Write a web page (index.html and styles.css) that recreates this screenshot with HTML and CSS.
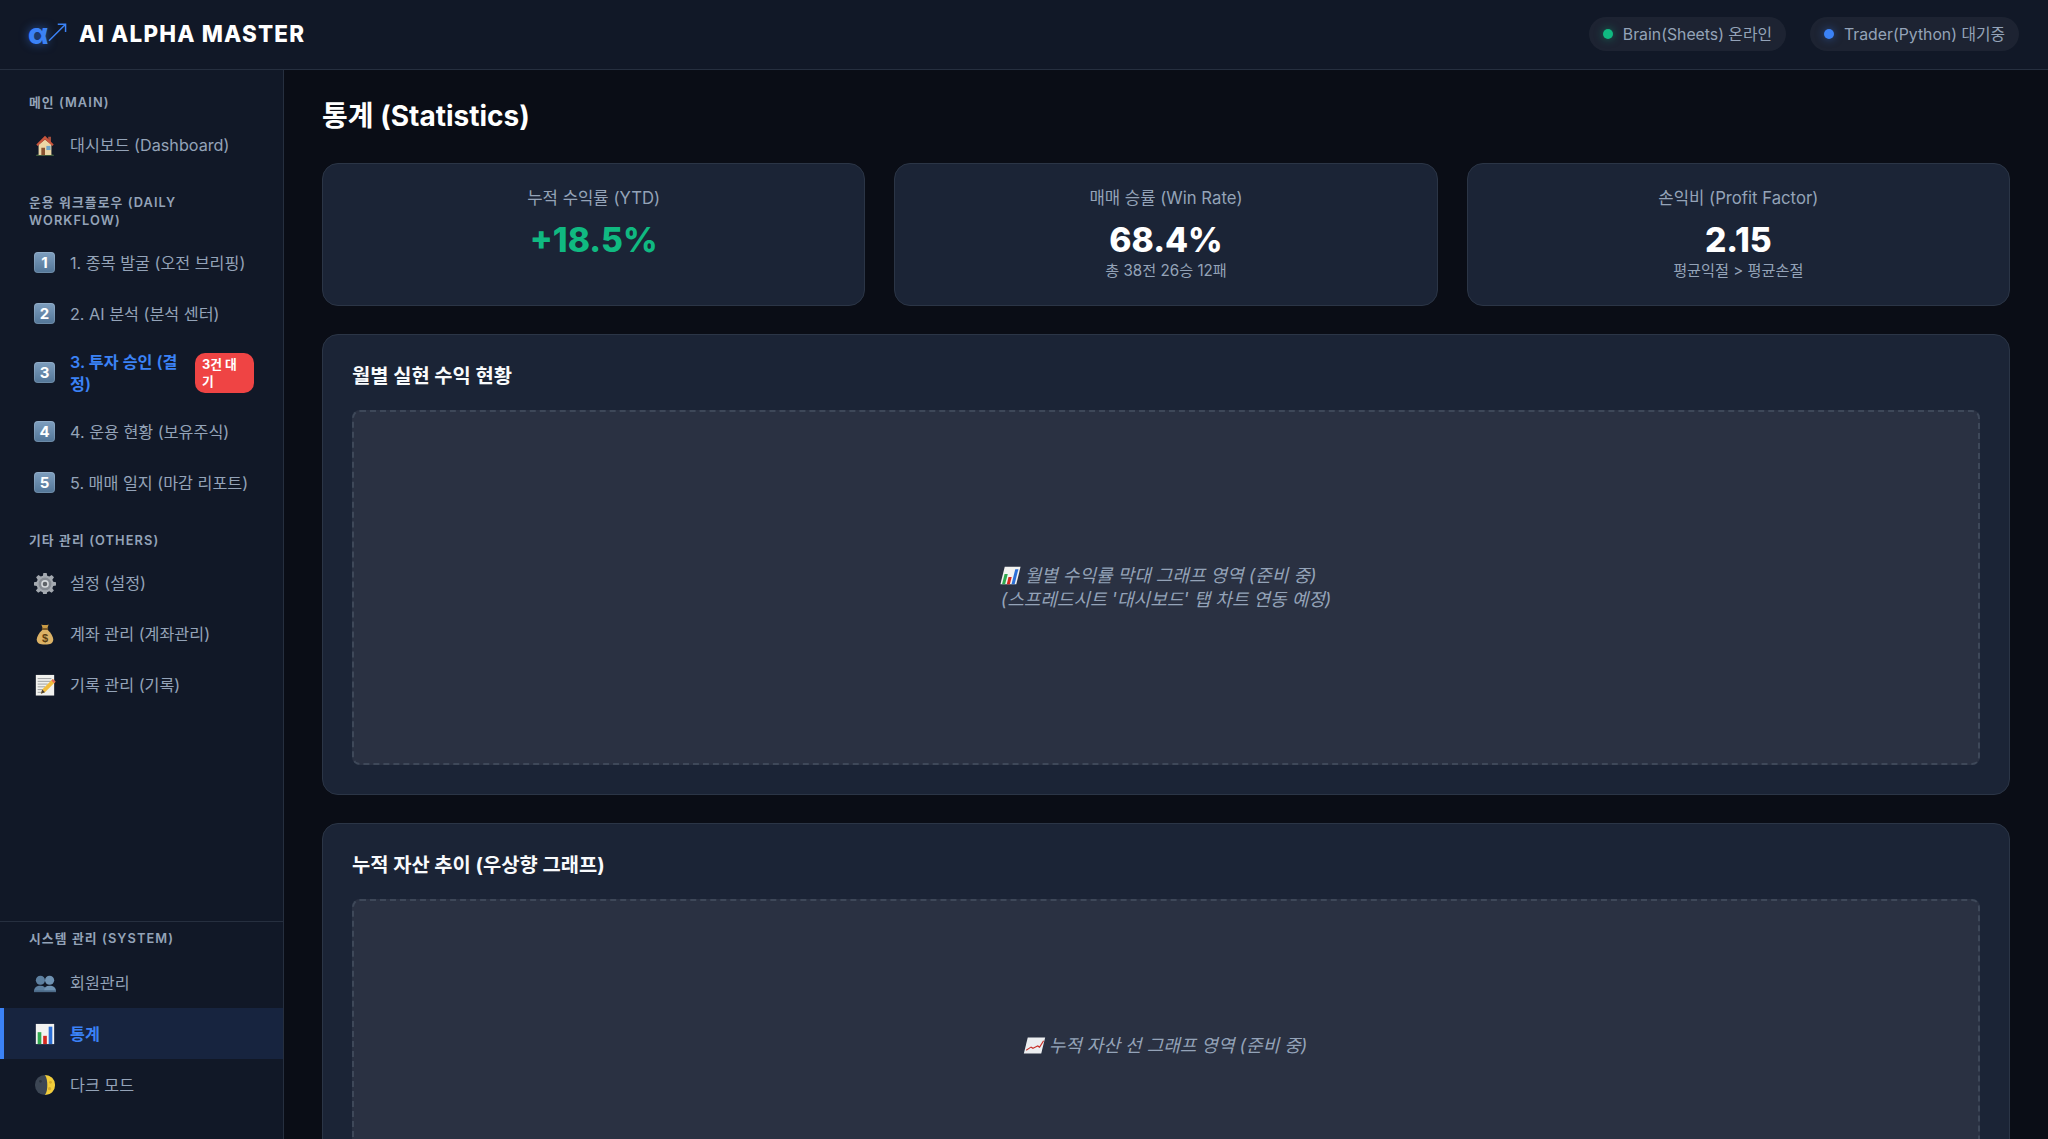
FILE: index.html
```html
<!DOCTYPE html>
<html lang="ko">
<head>
    <meta charset="UTF-8">
    <meta name="viewport" content="width=device-width, initial-scale=1.0">
    <title>AI Alpha Master</title>
    <link rel="stylesheet" href="styles.css">
</head>
<body>
    <svg class="icon-defs" aria-hidden="true">
        <symbol id="i-house" viewBox="0 0 24 24">
            <path d="M3 22.5h18l1 1H2z" fill="#6d9a52"/>
            <rect x="15.5" y="3" width="3" height="6" fill="#a8503f"/>
            <path d="M5 11.5 12 6l7 5.5V23H5z" fill="#ecd6a6"/>
            <path d="M12 2 2.5 11.5l1.5 1.5L12 6l8 7 1.5-1.5z" fill="#c9553c"/>
            <rect x="8" y="15" width="4" height="8" fill="#8a5230"/>
            <rect x="13.5" y="13" width="4.5" height="4.5" fill="#6fa3c8"/>
        </symbol>
        <symbol id="i-gear" viewBox="0 0 24 24">
            <path d="M10.2 1h3.6l.6 3 2.3 1 2.6-1.700 2.500 2.500L20 8.400l1 2.300 3 .6v3.400l-3 .6-1 2.300 1.700 2.600-2.500 2.500-2.600-1.700-2.300 1-.6 3h-3.600l-.6-3-2.300-1-2.600 1.700-2.500-2.500L4 17.600l-1-2.300-3-.6v-3.400l3-.6 1-2.300-1.700-2.600 2.500-2.500 2.600 1.700 2.300-1z" fill="#a4a9b0"/>
            <circle cx="12" cy="13" r="7" fill="#858a92"/>
            <circle cx="12" cy="13" r="4.200" fill="#d5d8dc"/>
            <circle cx="12" cy="13" r="2.500" fill="#5e6268"/>
        </symbol>
        <symbol id="i-bag" viewBox="0 0 24 24">
            <path d="M8 1.500c2 1 6 1 8 0l-1.500 4.500h-5z" fill="#c99a45"/>
            <rect x="8.500" y="5.500" width="7" height="2" rx="1" fill="#7d5a26"/>
            <path d="M9 7.500h6c3.500 3 6 7 6 10.500 0 4-3 5.500-9 5.500S3 22 3 18c0-3.500 2.500-7.500 6-10.500z" fill="#dcb266"/>
            <text x="12" y="21" text-anchor="middle" class="bag-sign">$</text>
        </symbol>
        <symbol id="i-memo" viewBox="0 0 24 24">
            <rect x="2" y="1" width="20" height="22.500" fill="#f1f1ee"/>
            <path d="M4 5h15M4 8h15M4 11h11M4 14h8M4 17h6M4 20h7" stroke="#8d8f92" stroke-width=".9"/>
            <path d="m20.500 5.500 3 3L12 20l-4.500 1.500L9 17z" fill="#f2bd3e"/>
            <path d="m20.500 5.500 3 3-1.500 1.500-3-3z" fill="#e46a5c"/>
            <path d="m9 17 3 3-4.500 1.500z" fill="#4a4038"/>
        </symbol>
        <symbol id="i-busts" viewBox="0 0 24 24">
            <g fill="#5d7f9f">
                <circle cx="7" cy="9" r="5"/>
                <path d="M0 21c0-4 3-6 7-6s6 2 6 6z"/>
            </g>
            <g fill="#6f92b2">
                <circle cx="17" cy="9" r="5"/>
                <path d="M11 21c0-4 2-6 6-6s7 2 7 6z"/>
            </g>
            <rect y="20" width="24" height="2" fill="#4d6b88"/>
        </symbol>
        <symbol id="i-bars" viewBox="0 0 24 24">
            <rect x="2" y="1" width="20" height="22" fill="#f3f3f1"/>
            <rect x="4" y="10" width="4" height="13" fill="#2fa84f"/>
            <rect x="10" y="14" width="4" height="9" fill="#d5281f"/>
            <rect x="16" y="4" width="4" height="19" fill="#2c6fd6"/>
        </symbol>
        <symbol id="i-moon" viewBox="0 0 24 24">
            <circle cx="12" cy="12" r="11" fill="#3c4654"/>
            <path d="M12 1a11 11 0 0 1 0 22c2-3 2.500-7 2.500-11S14 4 12 1z" fill="#f2cd3a"/>
            <circle cx="18" cy="9" r="1.500" fill="#d8ab2a"/>
            <circle cx="17" cy="16" r="1.800" fill="#d8ab2a"/>
            <circle cx="7" cy="8" r="1.500" fill="#2b333f"/>
        </symbol>
        <symbol id="i-line" viewBox="0 0 24 24">
            <rect x="1" y="2" width="22" height="20" fill="#eceef0"/>
            <path d="m3 18 5-4 3 1.500 5-3 3 1.500 3-8" fill="none" stroke="#c8322b" stroke-width="1.500"/>
        </symbol>
    </svg>

    <header class="topbar">
        <div class="brand">
            <span class="brand-mark"><span class="brand-alpha">α</span><svg class="brand-arrow" viewBox="0 0 20 20"><path d="M1 19 18 2M10 2h8v8" fill="none" stroke="#3b82f6" stroke-width="1.500"/></svg></span>
            <span class="brand-name">AI ALPHA MASTER</span>
        </div>
        <div class="status-list">
            <div class="status-pill"><span class="dot dot-green"></span>Brain(Sheets) 온라인</div>
            <div class="status-pill"><span class="dot dot-blue"></span>Trader(Python) 대기중</div>
        </div>
    </header>

    <div class="layout">
        <aside class="sidebar">
            <div class="nav-top">
                <div class="nav-section">
                    <div class="nav-label">메인 (Main)</div>
                    <a class="nav-item"><span class="nav-icon"><svg><use href="#i-house"/></svg></span><span class="nav-text">대시보드 (Dashboard)</span></a>
                </div>
                <div class="nav-section">
                    <div class="nav-label">운용 워크플로우 (Daily Workflow)</div>
                    <a class="nav-item"><span class="nav-icon"><span class="keycap">1</span></span><span class="nav-text">1. 종목 발굴 (오전 브리핑)</span></a>
                    <a class="nav-item"><span class="nav-icon"><span class="keycap">2</span></span><span class="nav-text">2. AI 분석 (분석 센터)</span></a>
                    <a class="nav-item nav-pending"><span class="nav-icon"><span class="keycap">3</span></span><span class="nav-text">3. 투자 승인 (결정)</span><span class="badge">3건 대기</span></a>
                    <a class="nav-item"><span class="nav-icon"><span class="keycap">4</span></span><span class="nav-text">4. 운용 현황 (보유주식)</span></a>
                    <a class="nav-item"><span class="nav-icon"><span class="keycap">5</span></span><span class="nav-text">5. 매매 일지 (마감 리포트)</span></a>
                </div>
                <div class="nav-section">
                    <div class="nav-label">기타 관리 (Others)</div>
                    <a class="nav-item"><span class="nav-icon"><svg><use href="#i-gear"/></svg></span><span class="nav-text">설정 (설정)</span></a>
                    <a class="nav-item"><span class="nav-icon"><svg><use href="#i-bag"/></svg></span><span class="nav-text">계좌 관리 (계좌관리)</span></a>
                    <a class="nav-item"><span class="nav-icon"><svg><use href="#i-memo"/></svg></span><span class="nav-text">기록 관리 (기록)</span></a>
                </div>
            </div>
            <div class="nav-bottom">
                <div class="nav-label">시스템 관리 (System)</div>
                <a class="nav-item"><span class="nav-icon"><svg><use href="#i-busts"/></svg></span><span class="nav-text">회원관리</span></a>
                <a class="nav-item active"><span class="nav-icon"><svg><use href="#i-bars"/></svg></span><span class="nav-text">통계</span></a>
                <a class="nav-item"><span class="nav-icon"><svg><use href="#i-moon"/></svg></span><span class="nav-text">다크 모드</span></a>
            </div>
        </aside>

        <main class="content">
            <h1 class="page-title">통계 (Statistics)</h1>

            <div class="stat-grid">
                <div class="stat-card">
                    <div class="stat-label">누적 수익률 (YTD)</div>
                    <div class="stat-value positive">+18.5%</div>
                </div>
                <div class="stat-card">
                    <div class="stat-label">매매 승률 (Win Rate)</div>
                    <div class="stat-value">68.4%</div>
                    <div class="stat-sub">총 38전 26승 12패</div>
                </div>
                <div class="stat-card">
                    <div class="stat-label">손익비 (Profit Factor)</div>
                    <div class="stat-value">2.15</div>
                    <div class="stat-sub">평균익절 &gt; 평균손절</div>
                </div>
            </div>

            <section class="chart-card">
                <h2 class="chart-title">월별 실현 수익 현황</h2>
                <div class="chart-box chart-monthly">
                    <p><svg class="inline-icon"><use href="#i-bars"/></svg> 월별 수익률 막대 그래프 영역 (준비 중)<br>(스프레드시트 '대시보드' 탭 차트 연동 예정)</p>
                </div>
            </section>

            <section class="chart-card">
                <h2 class="chart-title">누적 자산 추이 (우상향 그래프)</h2>
                <div class="chart-box chart-total">
                    <p><svg class="inline-icon"><use href="#i-line"/></svg> 누적 자산 선 그래프 영역 (준비 중)</p>
                </div>
            </section>
        </main>
    </div>
</body>
</html>
```

FILE: styles.css
```css
* {
    box-sizing: border-box;
}
html, body {
    height: 100%;
}
body {
    margin: 0;
    display: flex;
    flex-direction: column;
    height: 100vh;
    overflow: hidden;
    font-family: Inter, "Noto Sans CJK KR", sans-serif;
    background-color: #0a0d16;
    color: #f8fafc;
}
.icon-defs {
    display: none;
}

/* top bar */
.topbar {
    flex: none;
    display: flex;
    justify-content: space-between;
    align-items: center;
    height: 70px;
    padding: 0 29px 2px 28px;
    background-color: #111827;
    border-bottom: 1px solid #262f3f;
}
.brand {
    display: flex;
    align-items: center;
    gap: 11px;
}
.brand-mark {
    display: flex;
    align-items: center;
    width: 40px;
}
.brand-alpha {
    font-size: 29px;
    line-height: 1;
    font-weight: 800;
    color: #3b82f6;
    text-shadow: 0 0 10px rgba(59, 130, 246, 0.6);
}
.brand-arrow {
    width: 20px;
    height: 20px;
    margin-bottom: 4px;
}
.brand-name {
    font-size: 22.4px;
    font-weight: 800;
    letter-spacing: 1.2px;
    color: #fff;
}
.status-list {
    display: flex;
    gap: 24px;
}
.status-pill {
    display: flex;
    align-items: center;
    gap: 10px;
    height: 34px;
    padding: 0 14px;
    border-radius: 17px;
    background-color: rgba(255, 255, 255, 0.05);
    font-size: 15.8px;
    color: #94a3b8;
}
.dot {
    width: 10px;
    height: 10px;
    border-radius: 50%;
}
.dot-green {
    background-color: #10b981;
    box-shadow: 0 0 8px rgba(16, 185, 129, 0.5);
}
.dot-blue {
    background-color: #3b82f6;
    box-shadow: 0 0 8px rgba(59, 130, 246, 0.5);
}

/* sidebar */
.layout {
    flex: 1;
    display: flex;
    min-height: 0;
}
.sidebar {
    flex: none;
    width: 284px;
    display: flex;
    flex-direction: column;
    justify-content: space-between;
    background-color: #111827;
    border-right: 1px solid #262f3f;
}
.nav-top {
    padding-top: 23.5px;
}
.nav-section {
    margin-bottom: 24px;
}
.nav-bottom {
    padding: 8px 0 29px;
    border-top: 1px solid #262f3f;
}
.nav-label {
    padding: 0 29px;
    margin-bottom: 8px;
    font-size: 12.8px;
    line-height: 17.6px;
    font-weight: 600;
    letter-spacing: 1.1px;
    text-transform: uppercase;
    color: #94a3b8;
}
.nav-bottom .nav-label {
    margin-bottom: 9px;
}
.nav-item {
    display: flex;
    align-items: center;
    gap: 14px;
    padding: 11.5px 29px 11.5px 33px;
    min-height: 51px;
    font-size: 16.2px;
    line-height: 22px;
    color: #94a3b8;
}
.nav-icon {
    flex: none;
    display: flex;
    justify-content: center;
    width: 23px;
}
.nav-icon svg {
    width: 22px;
    height: 22px;
}
.keycap {
    display: flex;
    justify-content: center;
    align-items: center;
    width: 21px;
    height: 21px;
    border-radius: 4px;
    background: linear-gradient(#7f9fbf, #527597);
    box-shadow: inset 0 0 0 1px rgba(255, 255, 255, 0.15);
    font-size: 15px;
    font-weight: 700;
    color: #fff;
}
.bag-sign {
    font-family: "Liberation Sans", sans-serif;
    font-size: 12px;
    font-weight: 700;
    fill: #5b3d10;
}
.nav-pending {
    font-weight: 600;
    color: #3b82f6;
}
.nav-pending .nav-text {
    flex: 1;
}
.badge {
    flex: none;
    width: 59px;
    padding: 3px 7px;
    border-radius: 10px;
    background-color: #ef4444;
    font-size: 12.8px;
    line-height: 17px;
    font-weight: 700;
    color: #fff;
}
.nav-item.active {
    padding-left: 29px;
    border-left: 4px solid #3b82f6;
    background-color: #17243f;
    font-weight: 600;
    color: #3b82f6;
}

/* main content */
.content {
    flex: 1;
    min-width: 0;
    padding: 26px 38px 38px;
    overflow: hidden;
}
.page-title {
    margin: 0 0 27px;
    font-size: 28px;
    line-height: 40px;
    font-weight: 700;
    color: #fff;
}
.stat-grid {
    display: grid;
    grid-template-columns: repeat(3, 1fr);
    gap: 29px;
    margin-bottom: 28px;
}
.stat-card {
    height: 143px;
    padding: 23px 24px;
    border: 1px solid #2b3546;
    border-radius: 16px;
    background-color: #1b2436;
    text-align: center;
}
.stat-label {
    font-size: 16.7px;
    line-height: 22px;
    color: #94a3b8;
}
.stat-value {
    margin-top: 10px;
    font-size: 33.6px;
    line-height: 42px;
    font-weight: 800;
    color: #fff;
}
.stat-value.positive {
    color: #10b981;
}
.stat-sub {
    font-size: 15.2px;
    line-height: 20px;
    color: #94a3b8;
}
.chart-card {
    margin-bottom: 28px;
    padding: 29px;
    border: 1px solid #2b3546;
    border-radius: 16px;
    background-color: #1b2436;
}
.chart-title {
    margin: 0 0 22px;
    font-size: 19.84px;
    line-height: 24px;
    font-weight: 700;
    color: #f8fafc;
}
.chart-box {
    display: flex;
    justify-content: center;
    align-items: center;
    border: 2px dashed #3e4859;
    border-radius: 8px;
    background-color: #2a3142;
    font-size: 18px;
    line-height: 24px;
    font-style: italic;
    color: #94a3b8;
}
.chart-box p {
    margin: 0;
}
.chart-monthly {
    height: 355px;
}
.chart-total {
    height: 294px;
}
.inline-icon {
    width: 19px;
    height: 19px;
    vertical-align: -3px;
    transform: skewX(-14deg);
}
```
